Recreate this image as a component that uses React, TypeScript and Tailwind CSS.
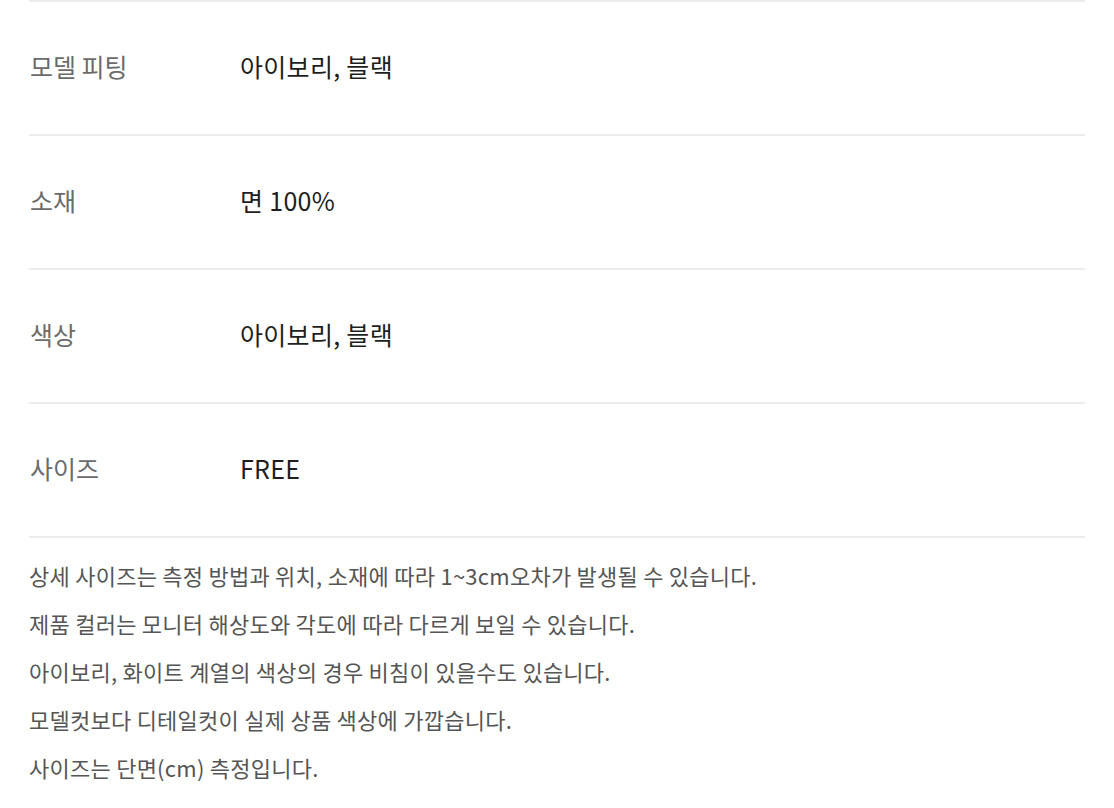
const rows = [
  { label: '모델 피팅', value: '아이보리, 블랙' },
  { label: '소재', value: '면 100%' },
  { label: '색상', value: '아이보리, 블랙' },
  { label: '사이즈', value: 'FREE' },
];

const notes = [
  '상세 사이즈는 측정 방법과 위치, 소재에 따라 1~3cm오차가 발생될 수 있습니다.',
  '제품 컬러는 모니터 해상도와 각도에 따라 다르게 보일 수 있습니다.',
  '아이보리, 화이트 계열의 색상의 경우 비침이 있을수도 있습니다.',
  '모델컷보다 디테일컷이 실제 상품 색상에 가깝습니다.',
  '사이즈는 단면(cm) 측정입니다.',
];

export default function App() {
  return (
    <div
      className="min-h-screen bg-white px-[29px]"
      style={{ fontFamily: '"Noto Sans CJK KR", "Noto Sans", sans-serif' }}
    >
      {/* Spec table */}
      <div>
        {rows.map((row) => (
          <div
            key={row.label}
            className="flex h-[134px] items-center border-t-2 border-[#ececec] pb-[3px]"
          >
            <div className="w-[211px] pl-px text-[25px] text-[#6b6b6b]">{row.label}</div>
            <div className="text-[25px] tracking-[0.3px] text-[#1e1e1e]">{row.value}</div>
          </div>
        ))}
      </div>

      {/* Notes */}
      <div className="border-t-2 border-[#ececec] pt-[13px]">
        {notes.map((note) => (
          <p key={note} className="text-[22px] leading-[48px] tracking-[0.25px] text-[#555]">
            {note}
          </p>
        ))}
      </div>
    </div>
  );
}
